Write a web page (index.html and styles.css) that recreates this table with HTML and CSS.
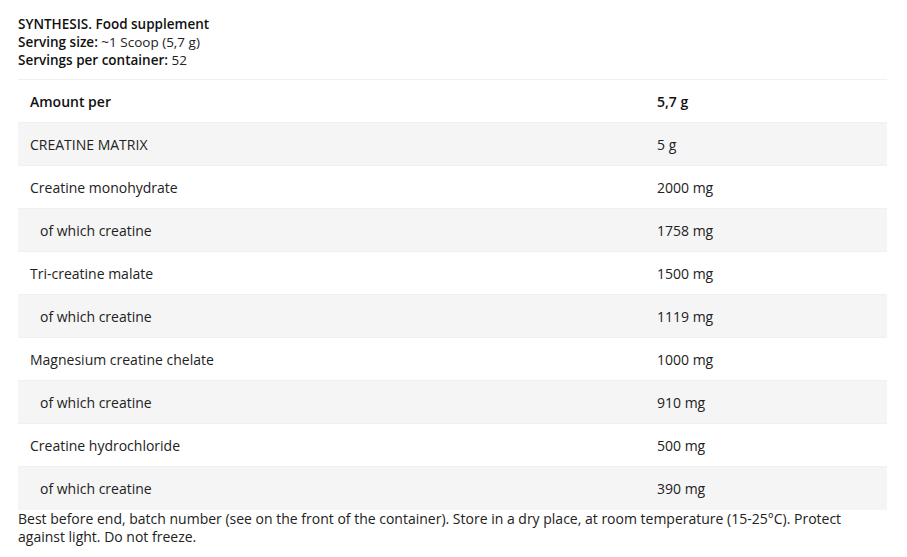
FILE: index.html
```html
<!DOCTYPE html>
<html>
<head>
<meta charset="utf-8">
<link rel="stylesheet" href="styles.css">
</head>
<body>
<div class="page">
  <div class="intro">
    <div class="line"><b>SYNTHESIS. Food supplement</b></div>
    <div class="line"><b>Serving size:</b> ~1 Scoop (5,7 g)</div>
    <div class="line"><b>Servings per container:</b> 52</div>
  </div>
  <table class="facts">
    <tr class="head"><td class="name">Amount per</td><td class="val">5,7 g</td></tr>
    <tr class="alt"><td class="name">CREATINE MATRIX</td><td class="val">5 g</td></tr>
    <tr><td class="name">Creatine monohydrate</td><td class="val">2000 mg</td></tr>
    <tr class="alt"><td class="name sub">of which creatine</td><td class="val">1758 mg</td></tr>
    <tr><td class="name">Tri-creatine malate</td><td class="val">1500 mg</td></tr>
    <tr class="alt"><td class="name sub">of which creatine</td><td class="val">1119 mg</td></tr>
    <tr><td class="name">Magnesium creatine chelate</td><td class="val">1000 mg</td></tr>
    <tr class="alt"><td class="name sub">of which creatine</td><td class="val">910 mg</td></tr>
    <tr><td class="name">Creatine hydrochloride</td><td class="val">500 mg</td></tr>
    <tr class="alt"><td class="name sub">of which creatine</td><td class="val">390 mg</td></tr>
  </table>
  <p class="note">Best before end, batch number (see on the front of the container). Store in a dry place, at room temperature (15-25°C). Protect against light. Do not freeze.</p>
</div>
</body>
</html>
```
FILE: styles.css
```css
html, body {
  margin: 0;
  padding: 0;
  background: #fff;
}
body {
  font-family: "Open Sans", "Liberation Sans", sans-serif;
  font-size: 14px;
  color: #222;
}
.page {
  padding: 15px 20px 0 18px;
}
.intro {
  font-size: 13.5px;
  line-height: 18px;
}
.intro b {
  font-weight: 600;
  color: #111;
}
.facts {
  width: 869px;
  margin-top: 10px;
  border-collapse: collapse;
  table-layout: fixed;
}
.facts tr {
  height: 43px;
  border-top: 1px solid #f0f0f0;
}
.facts td {
  padding: 0 12px;
  vertical-align: middle;
}
.facts .name {
  width: 615px;
}
.facts .val {
  padding-left: 0;
}
.facts .sub {
  padding-left: 22px;
}
.facts .alt {
  background: #f5f5f5;
}
.facts .head td {
  font-weight: 600;
  color: #111;
}
.note {
  margin: 0;
  padding-right: 40px;
  line-height: 18px;
  color: #222;
}
```
